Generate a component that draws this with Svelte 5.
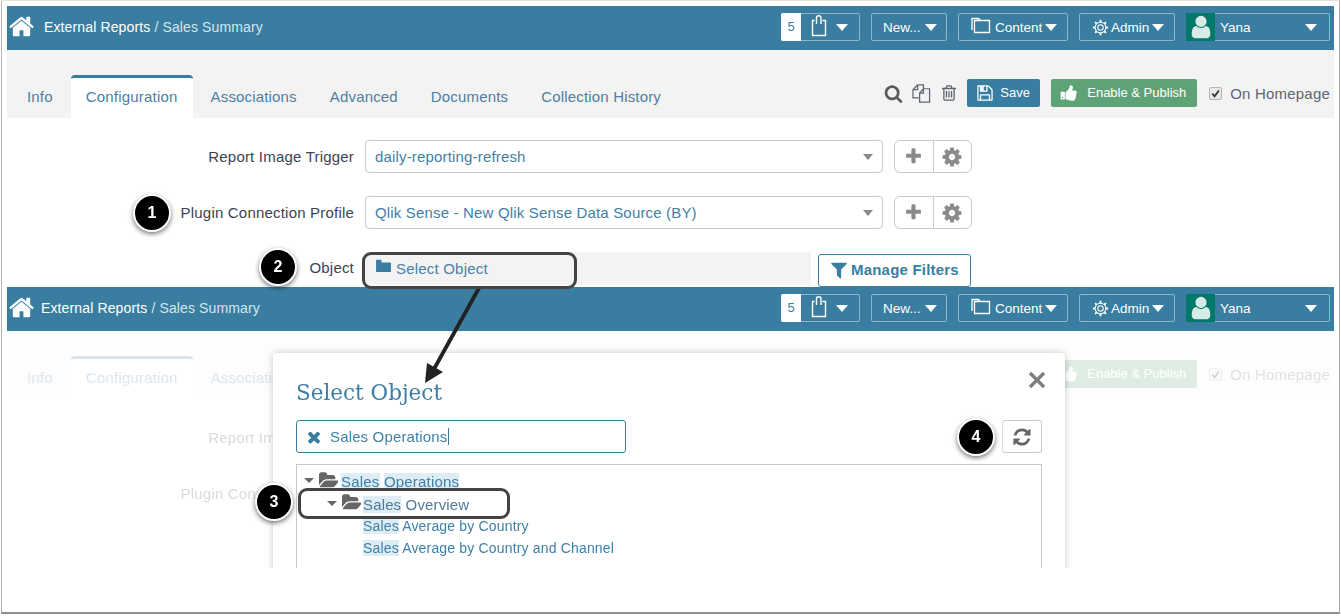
<script>
  const P = {
    home: "M1472 992v480q0 26-19 45t-45 19h-384v-384h-256v384h-384q-26 0-45-19t-19-45v-480q0-1 .5-3t.5-3l575-474 575 474q1 2 1 6zm223-69l-62 74q-8 9-21 11h-3q-13 0-21-7l-692-577-692 577q-12 8-24 7-13-2-21-11l-62-74q-8-10-7-23.500t11-21.500l719-599q32-26 76-26t76 26l244 204v-195q0-14 9-23t23-9h192q14 0 23 9t9 23v408l219 182q10 8 11 21.500t-7 23.500z",
    cog: "M1152 896q0-106-75-181t-181-75-181 75-75 181 75 181 181 75 181-75 75-181zm512-109v222q0 12-8 23t-20 13l-185 28q-19 54-39 91 35 50 107 138 10 12 10 25t-9 23q-27 37-99 108t-94 71q-12 0-26-9l-138-108q-44 23-91 38-16 136-29 186-7 28-36 28h-222q-14 0-24.500-8.500t-11.500-21.500l-28-184q-49-16-90-37l-141 107q-10 9-25 9-14 0-25-11-126-114-165-168-7-10-7-23 0-12 8-23 15-21 51-66.500t54-70.500q-27-50-41-99l-183-27q-13-2-21-12.500t-8-23.500v-222q0-12 8-23t19-13l186-28q14-46 39-92-40-57-107-138-10-12-10-24 0-10 9-23 26-36 98.500-107.500t94.500-71.500q13 0 26 10l138 107q44-23 91-38 16-136 29-186 7-28 36-28h222q14 0 24.500 8.500t11.500 21.500l28 184q49 16 90 37l142-107q9-9 24-9 13 0 25 10 129 119 165 170 7 8 7 22 0 12-8 23-15 21-51 66.500t-54 70.500q26 50 41 98l183 28q13 2 21 12.500t8 23.500z",
    refresh: "M1639 1056q0 5-1 7-64 268-268 434.500t-478 166.500q-146 0-282.500-55t-243.500-157l-129 129q-19 19-45 19t-45-19-19-45v-448q0-26 19-45t45-19h448q26 0 45 19t19 45-19 45l-137 137q71 66 161 102t187 36q134 0 250-65t186-179q11-17 53-117 8-23 30-23h192q13 0 22.500 9.500t9.500 22.500zm25-800v448q0 26-19 45t-45 19h-448q-26 0-45-19t-19-45 19-45l138-138q-148-137-349-137-134 0-250 65t-186 179q-11 17-53 117-8 23-30 23h-199q-13 0-22.500-9.500t-9.500-22.500v-7q65-268 270-434.500t480-166.500q146 0 284 55.500t245 156.500l130-129q19-19 45-19t45 19 19 45z",
    filter: "M1595 295q17 41-14 70l-493 493v742q0 42-39 59-13 5-25 5-27 0-45-19l-256-256q-19-19-19-45v-486l-493-493q-31-29-14-70 17-39 59-39h1280q42 0 59 39z",
    folder: "M1600 1312v-704q0-40-28-68t-68-28h-704q-40 0-68-28t-28-68v-64q0-40-28-68t-68-28h-320q-40 0-68 28t-28 68v960q0 40 28 68t68 28h1216q40 0 68-28t28-68z",
    open: "M1879 952q0 31-31 66l-336 396q-43 51-120.500 86.500t-143.500 35.500h-1088q-34 0-60.500-13t-26.500-43q0-31 31-66l336-396q43-51 120.500-86.500t143.500-35.500h1088q34 0 60.500 13t26.500 43zm-343-344v160h-832q-94 0-197 47.500t-164 119.500l-337 396-5 6q0-4-.5-12.500t-.5-12.500v-960q0-92 66-158t158-66h320q92 0 158 66t66 158v32h544q92 0 158 66t66 158z",
    plus: "M1600 736v192q0 40-28 68t-68 28h-416v416q0 40-28 68t-68 28h-192q-40 0-68-28t-28-68v-416h-416q-40 0-68-28t-28-68v-192q0-40 28-68t68-28h416v-416q0-40 28-68t68-28h192q40 0 68 28t28 68v416h416q40 0 68 28t28 68z",
    times: "M1490 1322q0 40-28 68l-136 136q-28 28-68 28t-68-28l-294-294-294 294q-28 28-68 28t-68-28l-136-136q-28-28-28-68t28-68l294-294-294-294q-28-28-28-68t28-68l136-136q28-28 68-28t68 28l294 294 294-294q28-28 68-28t68 28l136 136q28 28 28 68t-28 68l-294 294 294 294q28 28 28 68z",
    search: "M1216 832q0-185-131.500-316.500t-316.500-131.500-316.500 131.500-131.500 316.500 131.500 316.500 316.500 131.500 316.500-131.500 131.500-316.500zm512 832q0 52-38 90t-90 38q-54 0-90-38l-343-342q-179 124-399 124-143 0-273.500-55.500t-225-150-150-225-55.500-273.500 55.500-273.500 150-225 225-150 273.500-55.500 273.500 55.500 225 150 150 225 55.500 273.500q0 220-124 399l343 343q37 37 37 90z",
    thumb: "M320 1344q0-26-19-45t-45-19q-27 0-45.500 19t-18.500 45q0 27 18.500 45.500t45.500 18.500q26 0 45-18.500t19-45.500zm160-512v640q0 26-19 45t-45 19h-288q-26 0-45-19t-19-45v-640q0-26 19-45t45-19h288q26 0 45 19t19 45zm1184 0q0 86-55 149 15 44 15 76 3 76-43 137 17 56 0 117-15 57-54 94 9 112-49 181-64 76-197 78h-129q-66 0-144-15.500t-121.500-29-120.500-39.500q-123-43-158-44-26-1-45-19.500t-19-44.500v-641q0-25 18-43.500t43-20.500q24-2 76-59t101-121q68-87 101-120 18-18 31-48t17.500-48.500 13.500-60.500q7-39 12.500-61t19.500-52 34-50q19-19 45-19 46 0 82.500 10.500t60 26 40 40.500 24 45 12 50 5 45 .5 39q0 38-9.500 76t-19 60-27.500 56q-3 6-10 18t-11 22-8 24h277q78 0 135 57t57 135z",
    user: "M1536 1399q0 109-62.500 187t-150.500 78h-854q-88 0-150.500-78t-62.500-187q0-85 8.500-160.500t31.500-152 58.500-131 94-89 134.500-34.500q131 128 313 128t313-128q76 0 134.500 34.500t94 89 58.500 131 31.500 152 8.500 160.500zm-256-887q0 159-112.500 271.500t-271.500 112.500-271.500-112.500-112.500-271.500 112.500-271.500 271.500-112.500 271.500 112.500 112.500 271.500z",
    save: "M512 1536h768v-384h-768v384zm896 0h128v-896q0-14-10-38.500t-20-34.500l-281-281q-10-10-34-20t-39-10v416q0 40-28 68t-68 28h-576q-40 0-68-28t-28-68v-416h-128v1280h128v-416q0-40 28-68t68-28h832q40 0 68 28t28 68v416zm-384-928v-320q0-13-9.500-22.500t-22.500-9.500h-192q-13 0-22.500 9.500t-9.500 22.500v320q0 13 9.500 22.500t22.500 9.500h192q13 0 22.500-9.500t9.500-22.500zm640 32v928q0 40-28 68t-68 28h-1344q-40 0-68-28t-28-68v-1344q0-40 28-68t68-28h928q40 0 88 20t76 48l280 280q28 28 48 76t20 88z",
    trash: "M704 736v576q0 14-9 23t-23 9h-64q-14 0-23-9t-9-23v-576q0-14 9-23t23-9h64q14 0 23 9t9 23zm256 0v576q0 14-9 23t-23 9h-64q-14 0-23-9t-9-23v-576q0-14 9-23t23-9h64q14 0 23 9t9 23zm256 0v576q0 14-9 23t-23 9h-64q-14 0-23-9t-9-23v-576q0-14 9-23t23-9h64q14 0 23 9t9 23zm128 724v-948h-896v948q0 22 7 40.500t14.500 27 10.500 8.500h832q3 0 10.500-8.500t14.500-27 7-40.500zm-672-1076h448l-48-117q-7-9-17-11h-317q-10 2-17 11zm928 32v64q0 14-9 23t-23 9h-96v948q0 83-47 143.500t-113 60.500h-832q-66 0-113-58.500t-47-141.500v-952h-96q-14 0-23-9t-9-23v-64q0-14 9-23t23-9h309l70-167q15-37 54-63t79-26h320q40 0 79 26t54 63l70 167h309q14 0 23 9t9 23z"
  };
  const tabs = ["Info", "Configuration", "Associations", "Advanced", "Documents", "Collection History"];
  const tree = [
    { cls: "t1", caret: true, parts: [["Sales", 1], [" ", 0], ["Operations", 1]] },
    { cls: "t2", caret: true, parts: [["Sales", 1], [" Overview", 0]] },
    { cls: "t3", caret: false, parts: [["Sales", 1], [" Average by Country", 0]] },
    { cls: "t3", caret: false, parts: [["Sales", 1], [" Average by Country and Channel", 0]] }
  ];
</script>

{#snippet icon(name, cls)}
  <svg class={"ic " + cls} viewBox="0 0 1792 1792" aria-hidden="true"><path d={P[name]} fill="currentColor" /></svg>
{/snippet}

{#snippet nav(shift)}
  <header class="nav">
    <div class={"brand " + shift}>
      {@render icon("home", "i-home")}
      <span class="crumb"><b>External Reports</b> / Sales Summary</span>
    </div>
    <div class="navright">
      <div class="nb clip">
        <span class="count">5</span>
        <svg class="clipic" viewBox="0 0 16 22" aria-hidden="true"><path d="M3.500 5.500H1.500V20.500H14.500V5.500H11.500M5.500 9V2.800C5.500 1.500 6.600 .8 7.700 .8S10 1.500 10 2.800V9" fill="none" stroke="#fff" stroke-width="1.400" /></svg>
        <i class="car"></i>
      </div>
      <div class="nb new"><span>New...</span><i class="car"></i></div>
      <div class="nb content">
        <svg class="folderic" viewBox="0 0 20 17" aria-hidden="true"><path d="M3.500 3.500H18.500V15.500H3.500ZM1 13V1.500H7.500L9.500 3.500" fill="none" stroke="#fff" stroke-width="1.300" /></svg>
        <span>Content</span><i class="car"></i>
      </div>
      <div class="nb admin">
        <svg class="gearic" viewBox="-10 -10 20 20" aria-hidden="true"><circle r="3.200" fill="none" stroke="#fff" stroke-width="1.200" /><circle r="6.300" fill="none" stroke="#fff" stroke-width="1.200" /><path d="M0-9V-6.500M0 9V6.500M-9 0H-6.500M9 0H6.500M-6.400-6.400L-4.600-4.600M6.400 6.400L4.600 4.600M-6.400 6.400L-4.600 4.600M6.400-6.400L4.600-4.600" stroke="#fff" stroke-width="2.200" /></svg>
        <span>Admin</span><i class="car"></i>
      </div>
      <div class="nb usr">
        <span class="avatar">{@render icon("user", "i-user")}</span>
        <span class="uname">Yana</span>
        <i class="car"></i>
      </div>
    </div>
  </header>
{/snippet}

{#snippet page()}
  <div class="tabbar">
    <nav class="tabs">
      {#each tabs as t, i}
        <span class={i === 1 ? "tab active" : "tab"}>{t}</span>
      {/each}
    </nav>
    <div class="tools">
      {@render icon("search", "i-search")}
      <svg class="copyic" viewBox="0 0 20 20" aria-hidden="true"><path d="M6 .8L1 6V14.500H7M6 .8V6H1M6 .8H12V5M8 19V9.500L12 5H18.500V19ZM12 5V9.500H8" fill="none" stroke="#5d6670" stroke-width="1.300" /></svg>
      {@render icon("trash", "i-trash")}
      <span class="btn save">{@render icon("save", "i-save")}Save</span>
      <span class="btn pub">{@render icon("thumb", "i-thumb")}Enable &amp; Publish</span>
      <span class="home">
        <span class="cb"><svg viewBox="0 0 12 12" aria-hidden="true"><path d="M2.500 6.200L5 9L9.700 2.800" fill="none" stroke="#333" stroke-width="2" /></svg></span>
        On Homepage
      </span>
    </div>
  </div>
  <div class="form">
    <div class="row">
      <span class="lbl">Report Image Trigger</span>
      <div class="sel"><span>daily-reporting-refresh</span><i class="scar"></i></div>
      <div class="grp"><span>{@render icon("plus", "i-plus")}</span><span>{@render icon("cog", "i-cog")}</span></div>
    </div>
    <div class="row">
      <span class="lbl">Plugin Connection Profile</span>
      <div class="sel"><span>Qlik Sense - New Qlik Sense Data Source (BY)</span><i class="scar"></i></div>
      <div class="grp"><span>{@render icon("plus", "i-plus")}</span><span>{@render icon("cog", "i-cog")}</span></div>
    </div>
    <div class="row">
      <span class="lbl obl">Object</span>
      <div class="obj">{@render icon("folder", "i-folder")}Select Object</div>
      <span class="manage">{@render icon("filter", "i-filter")}Manage Filters</span>
    </div>
  </div>
{/snippet}

<div class="frame">
  <section class="shot">
    {@render nav("")}
    {@render page()}
  </section>

  <section class="shot second">
    {@render nav("left")}
    <div class="fade">{@render page()}</div>
    <div class="modal">
      <div class="mhead">
        <h2>Select Object</h2>
        <svg class="closeic" viewBox="0 0 18 18" aria-hidden="true"><path d="M2 2L16 16M16 2L2 16" stroke="#7d7d7d" stroke-width="3.400" fill="none" /></svg>
      </div>
      <div class="mtools">
        <div class="search">{@render icon("times", "i-x")}<span>Sales Operations</span><i class="cursor"></i></div>
        <span class="refresh">{@render icon("refresh", "i-refresh")}</span>
      </div>
      <div class="tree">
        {#each tree as r}
          <div class={"node " + r.cls}>
            {#if r.caret}<i class="tcar"></i>{@render icon("open", "i-open")}{/if}
            <span class="ntext">{#each r.parts as [txt, hl]}{#if hl}<mark>{txt}</mark>{:else}{txt}{/if}{/each}</span>
          </div>
        {/each}
      </div>
    </div>
  </section>

  <svg class="arrow" viewBox="0 0 1339 614" aria-hidden="true">
    <path d="M479 288L434 369" stroke="#222" stroke-width="3.800" fill="none" />
    <path d="M425 383L427 363L443 372Z" fill="#222" />
  </svg>
  <span class="hl h1"></span>
  <span class="hl h2"></span>
  <span class="badge b1">1</span>
  <span class="badge b2">2</span>
  <span class="badge b3">3</span>
  <span class="badge b4">4</span>
</div>

<style>
  :global(body) { background: #fff; }
  .frame {
    position: relative;
    box-sizing: border-box;
    width: 1339px;
    height: 614px;
    margin-left: 1px;
    padding: 5px 5px 0;
    background: #fff;
    border-top: 1px solid #e4e4e4;
    border-left: 1px solid #b5b5b5;
    border-right: 1px solid #a8a8a8;
    border-bottom: 2px solid #8f8f8f;
    font-family: "Liberation Sans", Arial, sans-serif;
    font-size: 15px;
    color: #3b7fa6;
    overflow: hidden;
  }
  .shot { position: relative; height: 281px; overflow: hidden; }
  .ic { display: block; flex: none; }

  .nav { display: flex; align-items: center; height: 44px; background: #397ea1; padding-right: 4px; }
  .brand { display: flex; align-items: center; padding-left: 1px; color: #d5e4ec; font-size: 14px; letter-spacing: .13px; }
  .brand.left .crumb { margin-left: 6px; }
  .crumb { margin-left: 9px; margin-bottom: 2px; }
  .crumb b { font-weight: 400; color: #fff; }
  .i-home { width: 27px; height: 27px; color: #fff; margin-bottom: 3px; }
  .navright { margin-left: auto; margin-bottom: 2px; display: flex; gap: 11px; align-items: center; }
  .nb {
    box-sizing: border-box;
    height: 28px;
    display: flex;
    align-items: center;
    border: 1px solid #8fb6ca;
    border-radius: 2px;
    color: #fff;
    font-size: 13.500px;
  }
  .car { display: block; flex: none; width: 0; height: 0; border-left: 6px solid transparent; border-right: 6px solid transparent; border-top: 7px solid #fff; }
  .clip { width: 79px; border-left: 0; }
  .count { width: 20px; height: 28px; background: #fff; color: #397ea1; font-size: 13px; line-height: 28px; text-align: center; flex: none; border-radius: 2px 0 0 2px; }
  .clipic { width: 16px; height: 22px; margin: 0 9px 2px 10px; }
  .new { width: 76px; padding-left: 11px; }
  .new .car { margin-left: 4px; }
  .content { width: 110px; padding-left: 12px; }
  .folderic { width: 20px; height: 17px; margin: 0 4px 3px 0; flex: none; }
  .content .car { margin-left: 3px; }
  .admin { width: 96px; padding-left: 12px; }
  .gearic { width: 17px; height: 17px; margin-right: 2px; flex: none; }
  .admin .car { margin-left: 3px; }
  .usr { width: 144px; border-left: 0; }
  .avatar { width: 29px; height: 28px; background: #00786a; display: flex; align-items: center; justify-content: center; flex: none; }
  .i-user { width: 26px; height: 26px; color: #d6ebe6; }
  .uname { margin-left: 5px; }
  .usr .car { margin-left: auto; margin-right: 12px; }

  .tabbar { display: flex; height: 68px; background: #f3f3f3; padding-right: 4px; }
  .tabs { display: flex; align-items: flex-end; gap: 3px; padding-left: 5px; }
  .tab { box-sizing: border-box; height: 43px; padding: 13px 15px 0; line-height: 17px; color: #4c7fa3; font-size: 15px; letter-spacing: .17px; white-space: nowrap; }
  .tab.active { background: #fff; border-top: 3px solid #397ea1; border-radius: 4px 4px 0 0; padding-top: 10px; letter-spacing: .2px; }
  .tools { margin-left: auto; display: flex; align-items: flex-start; padding-top: 29px; }
  .i-search { width: 19px; height: 19px; color: #5b5b5b; margin: 5px 9px 0 0; }
  .copyic { width: 19px; height: 19px; margin: 5px 9px 0 0; flex: none; }
  .i-trash { width: 18px; height: 18px; color: #5d6670; margin: 5px 9px 0 0; }
  .btn { box-sizing: border-box; height: 28px; padding-bottom: 1px; display: flex; align-items: center; border-radius: 2px; color: #fff; font-size: 13px; }
  .save { width: 73px; background: #397ea1; padding-left: 9px; margin-right: 11px; }
  .i-save { width: 18px; height: 18px; margin-right: 6px; }
  .pub { width: 146px; background: #60a277; padding-left: 9px; margin-right: 12px; }
  .i-thumb { width: 18px; height: 18px; margin-right: 9px; }
  .home { display: flex; align-items: center; gap: 8px; color: #5f6670; font-size: 15px; letter-spacing: .2px; height: 28px; }
  .cb { box-sizing: border-box; width: 13px; height: 13px; display: block; background: #e8e8e8; border: 1px solid #b5b5b5; border-radius: 2px; flex: none; }
  .cb svg { display: block; width: 11px; height: 11px; }

  .form { display: flex; flex-direction: column; gap: 23px; padding-top: 22px; }
  .row { display: flex; align-items: flex-start; height: 33px; }
  .lbl { width: 347px; text-align: right; line-height: 33px; color: #3d4354; font-size: 15px; letter-spacing: .2px; margin-right: 11px; flex: none; }
  .obl { line-height: 32px; }
  .sel {
    box-sizing: border-box; width: 518px; height: 33px; padding: 0 9px;
    display: flex; align-items: center; justify-content: space-between;
    border: 1px solid #ccc; border-radius: 4px; color: #3f80a8; letter-spacing: .17px;
  }
  .scar { display: block; width: 0; height: 0; border-left: 5.500px solid transparent; border-right: 5.500px solid transparent; border-top: 6px solid #8a8a8a; }
  .grp { box-sizing: border-box; width: 78px; height: 33px; margin-left: 11px; display: flex; border: 1px solid #ccc; border-radius: 6px; }
  .grp span { flex: 1; display: flex; align-items: center; justify-content: center; }
  .grp span + span { border-left: 1px solid #ccc; }
  .i-plus { width: 19px; height: 19px; color: #8a8a8a; }
  .i-cog { width: 22px; height: 22px; color: #8a8a8a; }
  .obj { box-sizing: border-box; width: 446px; height: 33px; padding: 0 0 1px 9px; display: flex; align-items: center; background: #f3f3f3; color: #4c7fa3; letter-spacing: .2px; }
  .i-folder { width: 19px; height: 19px; color: #397ea1; margin: -3px 3px 0 0; }
  .manage {
    box-sizing: border-box; width: 153px; height: 33px; margin: 2px 0 0 7px; padding: 0 0 2px 10px;
    display: flex; align-items: center;
    border: 1px solid #397ea1; border-radius: 3px; color: #397ea1; font-weight: 700; font-size: 15px; letter-spacing: .2px;
  }
  .i-filter { width: 20px; height: 20px; margin-right: 2px; }

  .fade { opacity: .2; }

  .modal {
    position: absolute; left: 266px; top: 66px; width: 792px; height: 230px;
    box-sizing: border-box; padding: 0 23px;
    background: #fff; border-radius: 4px 4px 0 0;
    box-shadow: 0 0 7px rgba(0, 0, 0, .22);
  }
  .mhead { display: flex; align-items: center; justify-content: space-between; height: 67px; padding-top: 11px; box-sizing: border-box; }
  .mhead h2 { margin: 0; font-family: "DejaVu Serif", serif; font-weight: 400; font-size: 21.500px; color: #3e7ea4; }
  .closeic { display: block; width: 18px; height: 18px; margin-right: -4px; margin-top: -24px; }
  .mtools { display: flex; justify-content: space-between; height: 33px; }
  .search {
    box-sizing: border-box; width: 330px; height: 33px; padding-left: 8px;
    display: flex; align-items: center;
    border: 1px solid #397ea1; border-radius: 3px; color: #3f80a8; letter-spacing: .15px;
  }
  .i-x { width: 18px; height: 18px; color: #397ea1; margin-right: 7px; }
  .cursor { display: block; width: 1px; height: 17px; margin-left: 1px; background: #397ea1; }
  .refresh { box-sizing: border-box; width: 40px; height: 33px; display: flex; align-items: center; justify-content: center; border: 1px solid #ccc; border-left-color: #ddd; border-radius: 3px; }
  .i-refresh { width: 20px; height: 20px; color: #666; }
  .tree { box-sizing: border-box; height: 130px; margin-top: 11px; padding-top: 5px; border: 1px solid #c8c8c8; border-bottom: 0; font-size: 14px; }
  .node { display: flex; align-items: center; height: 22px; color: #3f80a8; white-space: pre; letter-spacing: .17px; }
  .t1 { height: 23px; padding-left: 7px; font-size: 15px; letter-spacing: .2px; }
  .t2 { padding-left: 30px; color: #50789a; font-size: 15px; letter-spacing: .15px; }
  .t2 .i-open { margin-right: 2px; }
  .t3 { padding-left: 66px; }
  .tcar { display: block; width: 0; height: 0; border-left: 5px solid transparent; border-right: 5px solid transparent; border-top: 5px solid #666; margin-right: 5px; margin-bottom: 2px; }
  .i-open { width: 19px; height: 19px; color: #666; margin: -3px 3px 0 0; }
  mark { background: #deecf3; color: inherit; }

  .arrow { position: absolute; left: -2px; top: -1px; width: 1339px; height: 614px; pointer-events: none; }
  .hl { position: absolute; box-sizing: border-box; border: 3px solid #444; border-radius: 9px; }
  .h1 { left: 360px; top: 251px; width: 215px; height: 37px; }
  .h2 { left: 296px; top: 487px; width: 212px; height: 31px; }
  .badge {
    position: absolute; box-sizing: border-box; width: 38px; height: 38px;
    border-radius: 50%; background: #000; border: 2px solid #fff;
    box-shadow: 0 2px 5px rgba(0, 0, 0, .55);
    color: #fff; font-weight: 700; font-size: 16px; line-height: 34px; text-align: center;
  }
  .b1 { left: 131px; top: 193px; }
  .b2 { left: 257px; top: 247px; }
  .b3 { left: 253px; top: 482px; }
  .b4 { left: 955px; top: 417px; }
</style>
